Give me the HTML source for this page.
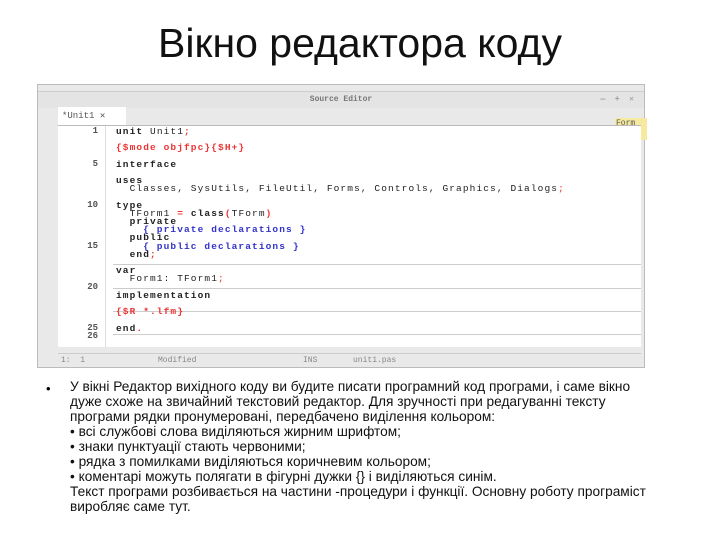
<!DOCTYPE html>
<html><head><meta charset="utf-8"><style>
body{margin:0;width:720px;height:540px;background:#fff;position:relative;overflow:hidden;font-family:"Liberation Sans","Noto Sans CJK SC",sans-serif}
.t{position:absolute;left:0;width:720px;top:20px;text-align:center;font-size:41px;color:#111}
.win{position:absolute;left:37px;top:84px;width:608px;height:284px;background:#e9e9e9;border:1px solid #bbb;box-sizing:border-box}
.tb{position:absolute;left:0;top:6px;width:100%;height:16px;border-top:1px solid #ccc;background:#e4e4e4;font:bold 8px "Liberation Mono",monospace;color:#777;text-align:center;line-height:16px}
.tab{position:absolute;left:20px;top:22px;width:68px;height:18px;background:#fff;font:9px "Liberation Mono",monospace;color:#555;line-height:18px;padding-left:4px;box-sizing:border-box}
.ed{position:absolute;left:20px;top:40px;width:583px;height:221px;background:#fff;border-top:1px solid #bbb}
.ln{position:absolute;left:0;width:40px;text-align:right;font:bold 9px "Liberation Mono",monospace;color:#555;line-height:9px}
.c{position:absolute;left:58px;font:bold 9.5px "Liberation Mono",monospace;letter-spacing:1.1px;color:#222;white-space:pre;line-height:9px}
.r{color:#e33}.b{color:#33c}.n{font-weight:normal}
.sep{position:absolute;left:55px;right:0;height:1px;background:#ccc}
.st{position:absolute;left:20px;top:268px;width:583px;height:14px;font:8px "Liberation Mono",monospace;color:#888;line-height:14px;border-top:1px solid #ccc}
.tx{position:absolute;left:70px;font-size:13.7px;color:#111;white-space:nowrap;letter-spacing:0}
</style></head><body>
<div class="t">Вікно редактора коду</div>
<div class="win">
<div class="tb">Source Editor<span style="position:absolute;right:10px;color:#999">—&nbsp;&nbsp;+&nbsp;&nbsp;✕</span></div>
<div class="tab">*Unit1 <b>✕</b></div>
<div style="position:absolute;left:577px;top:33px;width:30px;height:20px;background:#f5eaa0;font:8px 'Liberation Mono',monospace;line-height:9px;color:#555;padding:1px">Form<br>Posit</div>
<div class="ed">
<div style="position:absolute;left:47px;top:0;width:1px;height:221px;background:#ddd"></div>
<div class="ln" style="top:1px">1</div><div class="ln" style="top:34px">5</div><div class="ln" style="top:75px">10</div><div class="ln" style="top:116px">15</div><div class="ln" style="top:157px">20</div><div class="ln" style="top:198px">25</div><div class="ln" style="top:206px">26</div>
<div class="c" style="top:1px">unit <span class="n">Unit1</span><span class="r">;</span></div>
<div class="c r" style="top:17px">{$mode objfpc}{$H+}</div>
<div class="c" style="top:34px">interface</div>
<div class="c" style="top:50px">uses</div>
<div class="c n" style="top:58px">  Classes, SysUtils, FileUtil, Forms, Controls, Graphics, Dialogs<span class="r">;</span></div>
<div class="c" style="top:75px">type</div>
<div class="c" style="top:83px"><span class="n">  TForm1 </span><span class="r">=</span> class<span class="r">(</span><span class="n">TForm</span><span class="r">)</span></div>
<div class="c" style="top:91px">  private</div>
<div class="c b" style="top:99px">    { private declarations }</div>
<div class="c" style="top:107px">  public</div>
<div class="c b" style="top:116px">    { public declarations }</div>
<div class="c" style="top:124px">  end<span class="r">;</span></div>
<div class="sep" style="top:138px"></div>
<div class="c" style="top:140px">var</div>
<div class="c n" style="top:148px">  Form1: TForm1<span class="r">;</span></div>
<div class="sep" style="top:162px"></div>
<div class="c" style="top:165px">implementation</div>
<div class="sep" style="top:185px"></div>
<div class="c r" style="top:181px">{$R *.lfm}</div>
<div class="c" style="top:198px">end<span class="r">.</span></div>
<div class="sep" style="top:208px"></div>
</div>
<div class="st"><span style="position:absolute;left:3px">1:&nbsp;&nbsp;1</span><span style="position:absolute;left:100px">Modified</span><span style="position:absolute;left:245px">INS</span><span style="position:absolute;left:295px">unit1.pas</span></div>
</div>
<div style="position:absolute;left:46px;top:381px;font-size:13px">•</div>
<div class="tx" style="top:379px">У вікні Редактор вихідного коду ви будите писати програмний код програми, і саме вікно</div>
<div class="tx" style="top:394px">дуже схоже на звичайний текстовий редактор. Для зручності при редагуванні тексту</div>
<div class="tx" style="top:409px">програми рядки пронумеровані, передбачено виділення кольором:</div>
<div class="tx" style="top:424px">• всі службові слова виділяються жирним шрифтом;</div>
<div class="tx" style="top:439px">• знаки пунктуації стають червоними;</div>
<div class="tx" style="top:454px">• рядка з помилками виділяються коричневим кольором;</div>
<div class="tx" style="top:469px">• коментарі можуть полягати в фігурні дужки {} і виділяються синім.</div>
<div class="tx" style="top:484px">Текст програми розбивається на частини -процедури і функції. Основну роботу програміст</div>
<div class="tx" style="top:499px">виробляє саме тут.</div>
</body></html>
